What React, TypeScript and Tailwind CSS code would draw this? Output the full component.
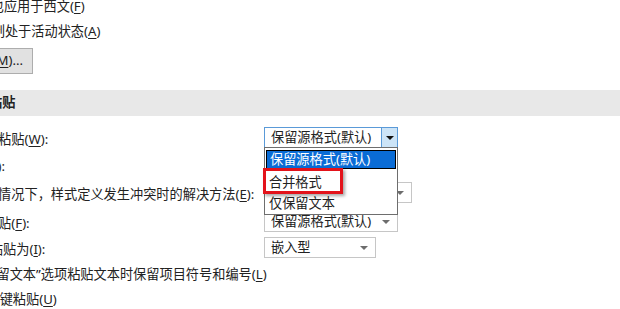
import React from 'react'

function Key({ k }: { k: string }) {
  return (
    <>
      (<span className="underline underline-offset-2">{k}</span>)
    </>
  )
}

function Arrow({ color = 'border-t-[#6d6d6d]' }: { color?: string }) {
  return (
    <span
      className={`block w-0 h-0 border-l-[4px] border-r-[4px] border-t-[4px] border-l-transparent border-r-transparent ${color}`}
    />
  )
}

function Combo({ text, width }: { text: string; width: string }) {
  return (
    <div
      className={`${width} h-[21px] border border-[#c6c6c6] bg-white flex items-center justify-between pl-[6px] pr-[7px]`}
    >
      <span className="leading-none">{text}</span>
      <Arrow />
    </div>
  )
}

function Row({
  label,
  mt,
  children,
}: {
  label: React.ReactNode
  mt: string
  children: React.ReactNode
}) {
  return (
    <div className={`flex items-center h-[21px] ${mt}`}>
      <div className="w-[345px] ml-[-81px] shrink-0 pt-[4px] whitespace-nowrap">
        {label}
      </div>
      {children}
    </div>
  )
}

export default function App() {
  return (
    <div className="w-[620px] h-[309px] overflow-hidden bg-white relative text-[13.2px] text-[#222] font-['Noto_Sans','Noto_Sans_CJK_SC',sans-serif]">
      <div className="flex flex-col">
        <div className="h-[14px] flex items-center ml-[-62px] whitespace-nowrap">
          中文字体也应用于西文<Key k="F" />
        </div>
        <div className="h-[14px] mt-[11px] flex items-center ml-[-61px] whitespace-nowrap">
          输入法控制处于活动状态<Key k="A" />
        </div>
        <div className="mt-[9px] ml-[-78px] w-[111px] h-[26px] border border-[#adadad] bg-[#e1e1e1] flex items-center justify-end pr-[9px] whitespace-nowrap">
          输入法设置<Key k="M" />...
        </div>

        <div className="mt-[16px] h-[26px] bg-[#e8e8e8] flex items-center">
          <span className="ml-[-90px] font-bold whitespace-nowrap">剪切、复制和粘贴</span>
        </div>

        <Row label={<>在同一文档内粘贴<Key k="W" />:</>} mt="mt-[11px]">
          <div className="w-[134px] h-[21px] border border-[#5a9ad8] bg-white flex items-stretch">
            <span className="flex-1 flex items-center pl-[6px] leading-none">保留源格式(默认)</span>
            <span className="w-[16px] bg-[#cce4f7] border-l border-[#5a9ad8] flex items-center justify-center">
              <Arrow color="border-t-[#111]" />
            </span>
          </div>
        </Row>
        <Row label={<>跨文档粘贴<Key k="B" />:</>} mt="mt-[6px]">
          <Combo text="保留源格式(默认)" width="w-[134px]" />
        </Row>
        <Row
          label={<>跨文档粘贴的情况下，样式定义发生冲突时的解决方法<Key k="E" />:</>}
          mt="mt-[7px]"
        >
          <Combo text="使用目标样式(默认)" width="w-[148px]" />
        </Row>
        <Row label={<>从其他程序粘贴<Key k="F" />:</>} mt="mt-[8px]">
          <Combo text="保留源格式(默认)" width="w-[134px]" />
        </Row>
        <Row label={<>将图片插入/粘贴为<Key k="I" />:</>} mt="mt-[5px]">
          <Combo text="嵌入型" width="w-[112px]" />
        </Row>

        <div className="h-[20px] mt-[7px] flex items-center ml-[-61px] whitespace-nowrap">
          使用“仅保留文本”选项粘贴文本时保留项目符号和编号<Key k="L" />
        </div>
        <div className="h-[20px] mt-[5px] flex items-center ml-[-57px] whitespace-nowrap">
          用 Insert 键粘贴<Key k="U" />
        </div>
      </div>

      <div className="absolute left-[264px] top-[147px] w-[134px] h-[68px] bg-white border border-[#6e6e6e] flex flex-col pt-[2px]">
        <div className="h-[19px] mx-[1px] bg-[#0a6cd6] border border-black text-white flex items-center pl-[3px] leading-none">
          保留源格式(默认)
        </div>
        <div className="h-[22px] flex items-center pl-[4px] mt-[3px] leading-none">合并格式</div>
        <div className="h-[20px] flex items-center pl-[4px] leading-none">仅保留文本</div>
      </div>

      <div className="absolute left-[263px] top-[168px] w-[80px] h-[26px] border-[3px] border-[#e3131b] shadow-[2px_2px_3px_rgba(0,0,0,0.35)]" />
    </div>
  )
}
